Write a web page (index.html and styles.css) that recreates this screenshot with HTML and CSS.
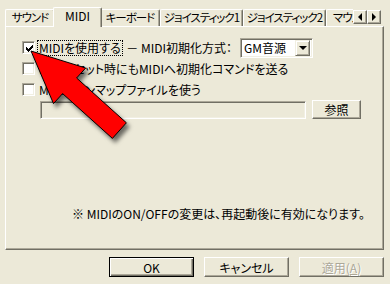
FILE: index.html
```html
<!DOCTYPE html>
<html lang="ja">
<head>
    <meta charset="UTF-8">
    <title>MIDI</title>
    <link rel="stylesheet" href="styles.css">
</head>
<body>
    <div class="dialog">
        <div class="tabbar">
            <div class="tabs">
                <div class="tab tab-sound">サウンド</div>
                <div class="tab tab-midi active">MIDI</div>
                <div class="tab tab-keys">キーボード</div>
                <div class="tab tab-joy">ジョイスティック1</div>
                <div class="tab tab-joy">ジョイスティック2</div>
                <div class="tab tab-mouse">マウス</div>
            </div>
            <div class="spin">
                <div class="spin-btn"><span class="tri-left"></span></div>
                <div class="spin-btn"><span class="tri-right"></span></div>
            </div>
        </div>

        <div class="panel">
            <div class="row row-midi">
                <span class="check checked">
                    <svg width="7" height="7" viewBox="0 0 7 7"><path d="M0 2h1v1h1v1h1V3h1V2h1V1h1V0h1v3H6v1H5v1H4v1H3v1H2V6H1V5H0z" fill="#000"/></svg>
                </span>
                <span class="label focus">MIDIを使用する</span>
                <span class="mode">－ MIDI初期化方式：</span>
                <div class="select">
                    <span class="select-value">GM音源</span>
                    <span class="select-btn"><span class="tri-down"></span></span>
                </div>
            </div>
            <div class="row">
                <span class="check"></span>
                <span class="label">MIDIリセット時にもMIDIへ初期化コマンドを送る</span>
            </div>
            <div class="row">
                <span class="check"></span>
                <span class="label">MIDIトーンマップファイルを使う</span>
            </div>
            <div class="row row-file">
                <div class="path"></div>
                <button class="btn btn-browse">参照</button>
            </div>
            <p class="note">※ MIDIのON/OFFの変更は、再起動後に有効になります。</p>
        </div>

        <div class="actions">
            <button class="btn btn-default">OK</button>
            <button class="btn">キャンセル</button>
            <button class="btn" disabled>適用(<u>A</u>)</button>
        </div>

        <!-- red pointer arrow drawn over the dialog -->
        <svg class="pointer" width="390" height="284" viewBox="0 0 390 284">
            <polygon points="31,51 85.7,68 76.6,78 126.4,122.8 112.4,138.4 62.6,93.6 53.5,103.6" fill="#ff0000" stroke="#000" stroke-width="1" stroke-linejoin="miter"/>
        </svg>
    </div>
</body>
</html>
```

FILE: styles.css
```css
* {
    margin: 0;
    padding: 0;
    box-sizing: border-box;
}

body {
    width: 390px;
    height: 284px;
    overflow: hidden;
    background: #ece9d8;
    color: #000;
    font: 12px/14px "Noto Sans CJK JP", sans-serif;
    font-feature-settings: "palt";
}

.dialog {
    position: relative;
    height: 284px;
    padding: 7px 6px 0 5px;
}

/* tab strip */
.tabbar {
    display: flex;
    height: 20px;
    position: relative;
    z-index: 1;
}

.tabs {
    display: flex;
    width: 348px;
    height: 20px;
    overflow: hidden;
}

.tab {
    flex: none;
    height: 17px;
    margin-top: 2px;
    border: 1px solid;
    border-color: #fff #716f64 transparent #fff;
    border-bottom: none;
    border-radius: 2px 2px 0 0;
    box-shadow: inset -1px 0 #aca899;
    background: #ece9d8;
    text-align: center;
    font-size: 11.5px;
    line-height: 15px;
    letter-spacing: -1px;
    white-space: nowrap;
}

.tab.active {
    position: relative;
    z-index: 2;
    height: 20px;
    margin: 0 -2px;
    font-size: 12px;
    line-height: 16px;
    letter-spacing: 0;
}

.tab-sound { width: 50px; }
.tab-midi { width: 49px; }
.tab-keys { width: 60px; }
.tab-joy { width: 83px; }
.tab-mouse { width: 60px; text-align: left; padding-left: 6px; }

.spin {
    display: flex;
    margin-top: 3px;
}

.spin-btn {
    width: 14px;
    height: 14px;
    display: flex;
    align-items: center;
    justify-content: center;
    background: #ece9d8;
    border: 1px solid;
    border-color: #fff #716f64 #716f64 #fff;
    box-shadow: inset -1px -1px #aca899;
}

.tri-left, .tri-right, .tri-down {
    width: 0;
    height: 0;
    border-style: solid;
}

.tri-left {
    border-width: 4px 4px 4px 0;
    border-color: transparent #000 transparent transparent;
}

.tri-right {
    border-width: 4px 0 4px 4px;
    border-color: transparent transparent transparent #000;
}

.tri-down {
    border-width: 4px 4px 0 4px;
    border-color: #000 transparent transparent transparent;
}

/* page body */
.panel {
    margin-top: -1px;
    height: 224px;
    padding: 10px 0 0 16px;
    border: 1px solid;
    border-color: #fff #716f64 #716f64 #fff;
    box-shadow: inset -1px -1px #aca899;
}

.row {
    display: flex;
    align-items: center;
    height: 21px;
}

.row-midi {
    width: 291px;
}

.check {
    flex: none;
    width: 13px;
    height: 13px;
    display: flex;
    align-items: center;
    justify-content: center;
    background: #fff;
    border: 1px solid;
    border-color: #aca899 #fff #fff #aca899;
    box-shadow: inset 1px 1px #716f64, inset -1px -1px #f1efe2;
}

.check svg {
    margin: 1px 0 0 1px;
}

.label {
    margin-left: 2px;
    padding: 0 1px;
    border: 1px solid transparent;
    white-space: nowrap;
}

.label.focus {
    border: 1px dotted #000;
}

.mode {
    margin-left: auto;
    margin-right: 8px;
    white-space: nowrap;
}

.select {
    flex: none;
    display: flex;
    align-items: center;
    justify-content: space-between;
    width: 73px;
    height: 20px;
    padding: 2px;
    background: #fff;
    border: 1px solid;
    border-color: #aca899 #fff #fff #aca899;
    box-shadow: inset 1px 1px #716f64, inset -1px -1px #f1efe2;
}

.select-value {
    padding-left: 1px;
}

.select-btn {
    width: 15px;
    height: 16px;
    display: flex;
    align-items: center;
    justify-content: center;
    background: #ece9d8;
    border: 1px solid;
    border-color: #f1efe2 #716f64 #716f64 #f1efe2;
    box-shadow: inset 1px 1px #fff, inset -1px -1px #aca899;
}

.row-file {
    align-items: flex-start;
    padding-top: 1px;
}

.path {
    width: 266px;
    height: 18px;
    margin-left: 18px;
    border: 1px solid;
    border-color: #aca899 #fff #fff #aca899;
    box-shadow: inset 1px 1px #716f64, inset -1px -1px #f1efe2;
}

.note {
    margin-top: 86px;
    padding-left: 50px;
    white-space: nowrap;
}

/* buttons */
.btn {
    width: 85px;
    height: 20px;
    background: #ece9d8;
    border: 1px solid;
    border-color: #fff #716f64 #716f64 #fff;
    box-shadow: inset -1px -1px #aca899;
    font: inherit;
    line-height: 17px;
    color: #000;
}

.btn-browse {
    width: 49px;
    height: 19px;
    margin: -1px 0 0 6px;
}

.btn-default {
    border-color: #000;
    box-shadow: inset 1px 1px #fff, inset -1px -1px #716f64, inset -2px -2px #aca899;
}

.btn:disabled {
    color: #aca899;
    text-shadow: 1px 1px #fff;
}

.btn u {
    text-decoration-color: #aca899;
}

.actions {
    display: flex;
    justify-content: flex-end;
    gap: 10px;
    margin-top: 7px;
}

.pointer {
    position: absolute;
    left: 0;
    top: 0;
    pointer-events: none;
    filter: drop-shadow(3px 4px 2px rgba(0, 0, 0, 0.55));
}
```
